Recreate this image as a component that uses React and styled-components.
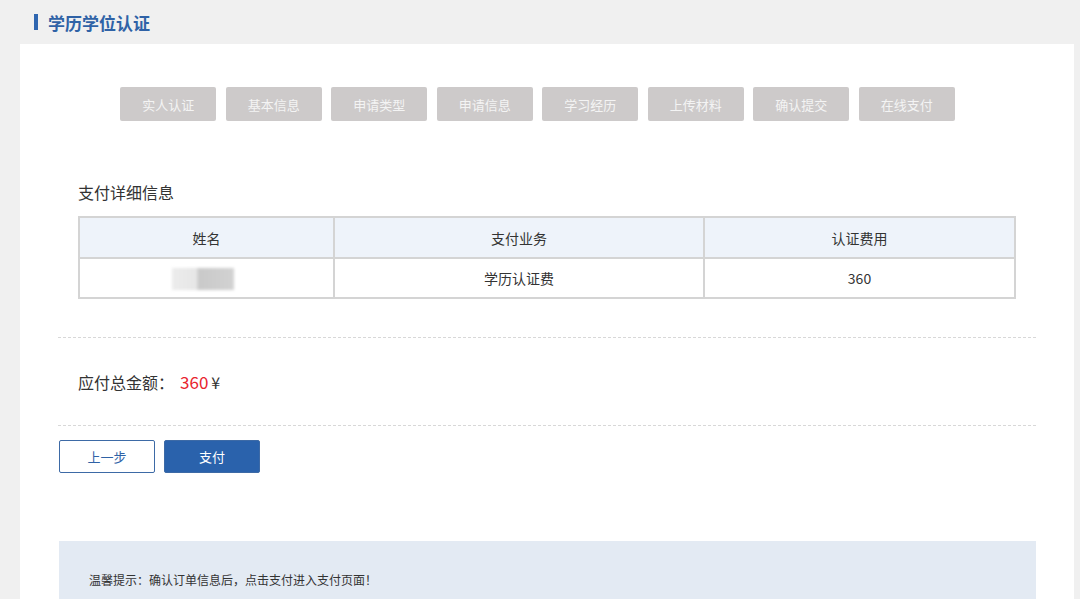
import styled, { createGlobalStyle } from "styled-components";

const Global = createGlobalStyle`
  html, body {
    margin: 0;
    padding: 0;
    background: #f0f0f0;
    font-family: "Noto Sans CJK SC", "Noto Sans", sans-serif;
    color: #333;
  }
`;

const steps = ["实人认证", "基本信息", "申请类型", "申请信息", "学习经历", "上传材料", "确认提交", "在线支付"];

const Pagina = styled.div`
  height: 599px;
  background: #f0f0f0;
  overflow: hidden;
`;

const Cabecera = styled.div`
  height: 44px;
  display: flex;
  align-items: center;
  padding-left: 34px;
  font-size: 17px;
  font-weight: 700;
  color: #2f62a6;
  &::before {
    content: "";
    flex: 0 0 4px;
    height: 16px;
    background: #2f66b0;
    margin-right: 10px;
  }
`;

const Panel = styled.div`
  margin: 0 6px 0 20px;
  background: #fff;
  padding: 43px 38px 0 38px;
  min-height: 560px;
`;

const Pasos = styled.div`
  display: flex;
  justify-content: center;
  gap: 9.5px;
  padding-right: 19px;
`;

const Paso = styled.div`
  width: 96px;
  height: 34px;
  display: flex;
  align-items: center;
  justify-content: center;
  background: ${(p) => (p.$activo ? "#2a62ac" : "#cdcaca")};
  color: #f4f4f4;
  font-size: 13px;
  border-radius: 2px;
`;

const Seccion = styled.div`
  padding: 0 20px;
`;

const Subtitulo = styled.div`
  margin-top: 59px;
  font-size: 16px;
  line-height: 24px;
  color: #333;
`;

const Tabla = styled.table`
  margin-top: 12px;
  width: 100%;
  border-collapse: collapse;
  border: 2px solid #d4d4d4;
  font-size: 14px;
  color: #333;
  th, td {
    border: 2px solid #d4d4d4;
    text-align: center;
    font-weight: 400;
    padding: 0;
  }
  th {
    background: #eef3fa;
    height: 39px;
  }
  td {
    height: 38px;
  }
`;

const Borroso = styled.span`
  display: inline-block;
  width: 62px;
  height: 22px;
  margin-right: 8px;
  vertical-align: middle;
  background: linear-gradient(90deg, #ececec 0%, #e6e6e6 40%, #c9c9c9 42%, #d2d2d2 100%);
  filter: blur(1.5px);
`;

const Linea = styled.div`
  border-top: 1px dashed #d8d8d8;
  margin-top: ${(p) => p.$arriba || 0}px;
`;

const Total = styled.div`
  height: 87px;
  display: flex;
  align-items: center;
  padding: 0 20px;
  font-size: 16px;
  color: #333;
  span {
    color: #e8232d;
    font-size: 17px;
    margin: 0 3px 0 6px;
  }
`;

const Botones = styled.div`
  display: flex;
  gap: 9px;
  margin-top: 14px;
  padding-left: 1px;
`;

const Boton = styled.button`
  width: 96px;
  height: 33px;
  font-family: inherit;
  font-size: 13px;
  border-radius: 2px;
  border: 1px solid #3d6aa6;
  background: ${(p) => (p.$primario ? "#2a62ac" : "#fff")};
  color: ${(p) => (p.$primario ? "#fff" : "#2f62a6")};
`;

const Aviso = styled.div`
  margin-top: 68px;
  margin-left: 1px;
  background: #e3eaf3;
  padding: 30px 30px 40px;
  font-size: 12px;
  color: #333;
`;

export default function App() {
  return (
    <Pagina>
      <Global />
      <Cabecera>学历学位认证</Cabecera>
      <Panel>
        <Pasos>
          {steps.map((s) => (
            <Paso key={s}>{s}</Paso>
          ))}
        </Pasos>
        <Seccion>
          <Subtitulo>支付详细信息</Subtitulo>
          <Tabla>
            <colgroup>
              <col style={{ width: "255px" }} />
              <col style={{ width: "370px" }} />
              <col />
            </colgroup>
            <thead>
              <tr>
                <th>姓名</th>
                <th>支付业务</th>
                <th>认证费用</th>
              </tr>
            </thead>
            <tbody>
              <tr>
                <td>
                  <Borroso />
                </td>
                <td>学历认证费</td>
                <td>360</td>
              </tr>
            </tbody>
          </Tabla>
        </Seccion>
        <Linea $arriba={38} />
        <Total>
          应付总金额：<span>360</span>¥
        </Total>
        <Linea />
        <Botones>
          <Boton>上一步</Boton>
          <Boton $primario>支付</Boton>
        </Botones>
        <Aviso>温馨提示：确认订单信息后，点击支付进入支付页面！</Aviso>
      </Panel>
    </Pagina>
  );
}
